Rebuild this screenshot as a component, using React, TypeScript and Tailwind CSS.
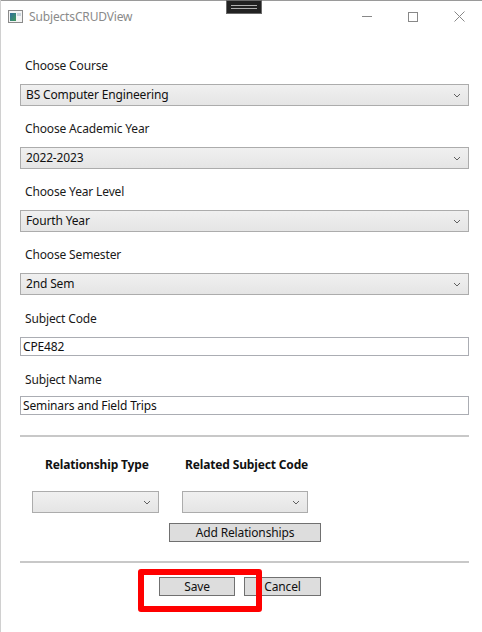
import React from "react";

const font = { fontFamily: '"Noto Sans", "Open Sans", sans-serif' };

function Chevron() {
  return (
    <svg width="8" height="5" viewBox="0 0 8 5" className="shrink-0">
      <path d="M1 1 L4 4 L7 1" fill="none" stroke="#606060" strokeWidth="1" />
    </svg>
  );
}

function Combo({ value, className }: { value?: string; className: string }) {
  return (
    <div
      className={`flex items-center justify-between border border-[#acacac] bg-gradient-to-b from-[#f0f0f0] to-[#e5e5e5] pl-[5px] pr-[7px] text-[12px] tracking-[-0.15px] text-[#111] ${className}`}
    >
      <span className="leading-none">{value ?? ""}</span>
      <Chevron />
    </div>
  );
}

function Label({ children, className }: { children: React.ReactNode; className: string }) {
  return (
    <div className={`pl-[5px] text-[12px] leading-[16px] tracking-[-0.15px] text-[#1a1a1a] ${className}`}>{children}</div>
  );
}

function TextBox({ value, className }: { value: string; className: string }) {
  return (
    <div
      className={`flex items-center border border-[#abadb3] bg-white pl-[2px] text-[12px] leading-none tracking-[-0.15px] text-[#111] ${className}`}
    >
      {value}
    </div>
  );
}

export default function App() {
  return (
    <div className="relative h-[632px] w-[482px] overflow-hidden border-l border-[#d0d0d0] bg-white" style={font}>
      {/* title bar */}
      <div className="relative h-[32px] border-t border-[#9a9a9a]">
        <div className="flex h-full items-center pl-[7px]">
          <svg width="15" height="13" viewBox="0 0 15 13">
            <rect x="0.5" y="0.5" width="14" height="12" fill="#f4f4f4" stroke="#8a8a8a" />
            <rect x="2" y="3" width="6" height="8" fill="url(#g1)" />
            <rect x="9" y="3" width="4" height="3" fill="#c8d4dc" />
            <defs>
              <linearGradient id="g1" x1="0" y1="0" x2="1" y2="1">
                <stop offset="0" stopColor="#2f6d9c" />
                <stop offset="1" stopColor="#3f9a5a" />
              </linearGradient>
            </defs>
          </svg>
          <span className="ml-[6px] text-[12px] tracking-[-0.15px] text-[#8a8a8a]">SubjectsCRUDView</span>
        </div>
        {/* drag handle */}
        <div className="absolute left-[225px] top-[-1px] flex h-[14px] w-[36px] flex-col items-center justify-center gap-[2px] border border-[#6a6a6a] bg-[#222]">
          <div className="h-px w-[26px] bg-[#b0b0b0]" />
          <div className="h-px w-[26px] bg-[#b0b0b0]" />
        </div>
        {/* window buttons */}
        <div className="absolute right-0 top-0 flex h-full items-center">
          <div className="flex w-[46px] justify-center">
            <div className="h-px w-[10px] bg-[#888]" />
          </div>
          <div className="flex w-[46px] justify-center">
            <div className="h-[10px] w-[10px] border border-[#888]" />
          </div>
          <div className="flex w-[46px] justify-center">
            <svg width="11" height="11" viewBox="0 0 11 11">
              <path d="M0.5 0.5 L10.5 10.5 M10.5 0.5 L0.5 10.5" stroke="#888" strokeWidth="1" />
            </svg>
          </div>
        </div>
      </div>

      {/* content */}
      <div className="pl-[19px] pr-[13px]">
        <Label className="mt-[26px]">Choose Course</Label>
        <Combo className="mt-[10px] h-[22px]" value="BS Computer Engineering" />
        <Label className="mt-[15px]">Choose Academic Year</Label>
        <Combo className="mt-[10px] h-[22px]" value="2022-2023" />
        <Label className="mt-[15px]">Choose Year Level</Label>
        <Combo className="mt-[10px] h-[22px]" value="Fourth Year" />
        <Label className="mt-[15px]">Choose Semester</Label>
        <Combo className="mt-[10px] h-[22px]" value="2nd Sem" />
        <Label className="mt-[16px]">Subject Code</Label>
        <TextBox className="mt-[10px] h-[19px]" value="CPE482" />
        <Label className="mt-[16px]">Subject Name</Label>
        <TextBox className="mt-[8px] h-[19px]" value="Seminars and Field Trips" />
        <div className="mt-[20px] h-[2px] bg-[#c8c8c8]" />

        <div className="mt-[20px] flex text-[12px] font-bold leading-[16px] tracking-[-0.15px] text-[#111]">
          <div className="ml-[25px] w-[140px]">Relationship Type</div>
          <div>Related Subject Code</div>
        </div>
        <div className="mt-[18px] flex">
          <Combo className="ml-[12px] h-[22px] w-[127px]" />
          <Combo className="ml-[23px] h-[22px] w-[126px]" />
        </div>
        <div className="mt-[10px] flex">
          <div className="ml-[149px] flex h-[19px] w-[152px] items-center justify-center border border-[#707070] bg-[#dddddd] text-[12px] leading-none tracking-[-0.15px] text-[#111]">
            Add Relationships
          </div>
        </div>
        <div className="mt-[19px] h-[2px] bg-[#c8c8c8]" />
        <div className="relative mt-[14px] flex">
          <div className="ml-[139px] flex h-[19px] w-[76px] items-center justify-center border border-[#707070] bg-[#dddddd] text-[12px] leading-none tracking-[-0.15px] text-[#111]">
            Save
          </div>
          <div className="ml-[9px] flex h-[19px] w-[77px] items-center justify-center border border-[#707070] bg-[#dddddd] text-[12px] leading-none tracking-[-0.15px] text-[#111]">
            Cancel
          </div>
          <div className="absolute left-[118px] top-[-8px] h-[43px] w-[124px] rounded-[3px] border-[6px] border-[#ff0000]" />
        </div>
      </div>
    </div>
  );
}
